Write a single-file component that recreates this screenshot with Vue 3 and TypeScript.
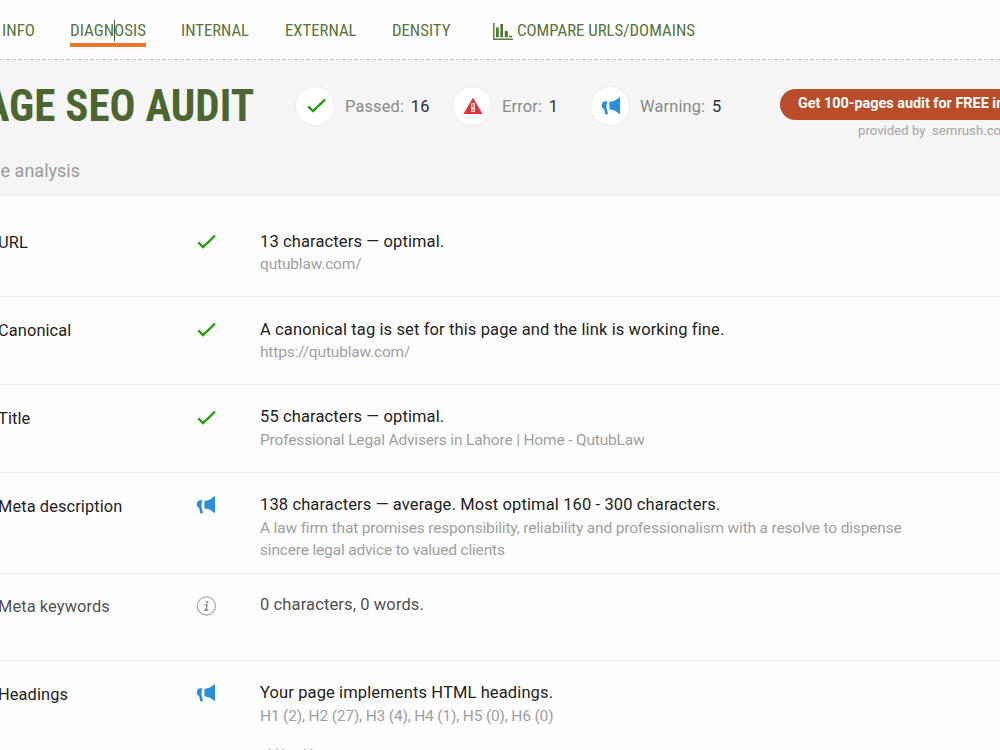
<script setup lang="ts">
import { computed, defineComponent, h } from 'vue'

type Status = 'pass' | 'error' | 'warn' | 'info'

interface AuditRow {
  label: string
  status: Status
  text: string
  details: string[]
  height: number
  muted?: boolean
}

const nav = [
  { label: 'INFO', x: 2, width: 33 },
  { label: 'DIAGNOSIS', x: 70.4, width: 76, active: true },
  { label: 'INTERNAL', x: 181.4, width: 68 },
  { label: 'EXTERNAL', x: 285, width: 71.5 },
  { label: 'DENSITY', x: 392.4, width: 58.5 },
]
const navItems = computed(() =>
  nav.map((n, i) => ({
    ...n,
    gap: i === 0 ? n.x : n.x - nav[i - 1].x - nav[i - 1].width,
  })),
)

const stats: { status: Status; label: string; count: number; cls: string }[] = [
  { status: 'pass', label: 'Passed:', count: 16, cls: 'passed' },
  { status: 'error', label: 'Error:', count: 1, cls: 'errors' },
  { status: 'warn', label: 'Warning:', count: 5, cls: 'warnings' },
]

const rows: AuditRow[] = [
  { label: 'URL', status: 'pass', text: '13 characters — optimal.', details: ['qutublaw.com/'], height: 88 },
  { label: 'Canonical', status: 'pass', text: 'A canonical tag is set for this page and the link is working fine.', details: ['https://qutublaw.com/'], height: 88 },
  { label: 'Title', status: 'pass', text: '55 characters — optimal.', details: ['Professional Legal Advisers in Lahore | Home - QutubLaw'], height: 88 },
  {
    label: 'Meta description',
    status: 'warn',
    text: '138 characters — average. Most optimal 160 - 300 characters.',
    details: [
      'A law firm that promises responsibility, reliability and professionalism with a resolve to dispense',
      'sincere legal advice to valued clients',
    ],
    height: 100.5,
  },
  { label: 'Meta keywords', status: 'info', text: '0 characters, 0 words.', details: [], height: 87.5, muted: true },
  { label: 'Headings', status: 'warn', text: 'Your page implements HTML headings.', details: ['H1 (2), H2 (27), H3 (4), H4 (1), H5 (0), H6 (0)'], height: 120 },
]

const StatusIcon = defineComponent({
  props: { status: { type: String, required: true } },
  setup(props) {
    return () => {
      const shapes = {
        pass: [h('path', { d: 'M2.2 9.4L7 14L19 2.6', fill: 'none', stroke: '#25a10f', 'stroke-width': 2.4 })],
        error: [
          h('path', { d: 'M10 .7L19.6 17H.4Z', fill: '#e8302f' }),
          h('path', { d: 'M8.2 6.2H11.8V15H8.2Z', fill: '#fff' }),
          h('path', { d: 'M10 7V10.8M10 12.3V14.2', stroke: '#e8302f', 'stroke-width': 1.2 }),
        ],
        warn: [
          h('path', { d: 'M19 0V17.3L13.6 13.5L8.4 12.3V5L13.5 3.8Z', fill: '#2b8ddd' }),
          h('path', { d: 'M6.6 4.3H3.7C2 4.8 .7 6.4 .8 8.5C.9 10.3 1.9 11.3 3.1 12L4.4 17.6L7 17L5.8 12.1C5.2 9.7 5.4 6.8 6.6 4.3Z', fill: '#2b8ddd' }),
        ],
        info: [
          h('circle', { cx: 10.4, cy: 9, r: 9.1, fill: 'none', stroke: '#aaa', 'stroke-width': 1.2 }),
          h('circle', { cx: 11.3, cy: 5.1, r: 1.2, fill: '#888' }),
          h('path', { d: 'M8.4 7.9H11.1L10 13H12.3M8.2 13H10', fill: 'none', stroke: '#888', 'stroke-width': 1.3 }),
        ],
      }
      return h('svg', { width: 20, height: 18, viewBox: '0 0 20 18', overflow: 'visible' }, shapes[props.status as Status])
    }
  },
})
</script>

<template>
  <div class="page">
    <nav class="nav">
      <a v-for="n in navItems" :key="n.label" class="nav-item" :class="{ active: n.active }" :style="{ marginLeft: n.gap + 'px', width: n.width + 'px' }">
        <svg height="24" :width="n.width" overflow="visible">
          <text x="0" y="19" :textLength="n.width" lengthAdjust="spacingAndGlyphs">{{ n.label }}</text>
        </svg>
        <span v-if="n.active" class="caret"></span>
      </a>
      <a class="nav-item compare">
        <svg class="bars" width="20" height="18" viewBox="0 0 20 18">
          <path d="M.8 0V16.2H19.8" fill="none" stroke="#56803c" stroke-width="1.5" />
          <path d="M3 4.5H5.7V14.2H3ZM7.4 1H10V14.2H7.4ZM11.8 8H14.8V14.2H11.8ZM16 12.8H19V14.2H16Z" fill="#477829" />
        </svg>
        <svg height="24" width="178" overflow="visible">
          <text x="0" y="19" textLength="178" lengthAdjust="spacingAndGlyphs">COMPARE URLS/DOMAINS</text>
        </svg>
      </a>
    </nav>

    <header class="hero">
      <div class="hero-top">
        <h1>
          <svg width="256" height="50">
            <text x="254" y="46" text-anchor="end" textLength="291" lengthAdjust="spacingAndGlyphs">PAGE SEO AUDIT</text>
          </svg>
        </h1>
        <div v-for="s in stats" :key="s.label" class="stat" :class="s.cls">
          <span class="disc"><StatusIcon :status="s.status" /></span>
          <span class="stat-label">{{ s.label }}</span>
          <span class="stat-count">{{ s.count }}</span>
        </div>
        <div class="promo">
          <a class="cta">Get 100-pages audit for FREE in 2 minutes</a>
          <span class="provider">provided by&nbsp; semrush.com</span>
        </div>
      </div>
      <div class="subtitle"><span>Page analysis</span></div>
    </header>

    <main>
      <section v-for="r in rows" :key="r.label" class="row" :class="{ muted: r.muted }" :style="{ height: r.height + 'px' }">
        <div class="label">{{ r.label }}</div>
        <div class="status" :class="r.status"><StatusIcon :status="r.status" /></div>
        <div class="body">
          <p class="text">{{ r.text }}</p>
          <p v-for="d in r.details" :key="d" class="detail">{{ d }}</p>
          <p v-if="r.label === 'Headings'" class="detail tree">&lt;H1&gt;&nbsp; H</p>
        </div>
      </section>
    </main>
  </div>
</template>

<style>
body { margin: 0; overflow: hidden; }
</style>

<style scoped>
.page { width: 1000px; height: 750px; overflow: hidden; background: #fefefe; font-family: Roboto, "Liberation Sans", sans-serif; color: #222; }
.nav { display: flex; align-items: flex-start; height: 59px; box-sizing: border-box; padding-top: 17px; }
.nav-item { position: relative; flex: none; height: 26px; }
.nav-item svg { display: block; flex: none; }
.nav text, h1 text { font-family: "Roboto Condensed", Roboto, sans-serif; font-stretch: 75%; fill: #56753c; }
.nav text { font-size: 17px; }
.active { border-bottom: 4px solid #ec762c; }
.caret { position: absolute; left: 44px; top: 3px; width: 1px; height: 21px; background: #456030; }
.compare { display: flex; margin-left: 42px; gap: 4px; }
.compare .bars { margin-top: 6px; }
.hero { height: 137px; background: #f4f5f4; border-bottom: 1px solid #f0f0f0; box-sizing: border-box; overflow: hidden; }
.hero::before { content: ""; display: block; height: 1px; background: repeating-linear-gradient(90deg, #c6c6c6 0 4px, #f6f6f6 4px 6px); }
.hero-top { display: flex; height: 93px; align-items: flex-start; }
h1 { margin: 15px 0 0; width: 254px; height: 50px; flex: none; }
h1 svg { display: block; }
h1 text { fill: #4b662f; font-size: 44px; font-weight: 700; }
.stat { display: flex; align-items: center; height: 42px; margin-top: 25px; flex: none; font-size: 16.4px; letter-spacing: .15px; }
.passed { width: 157px; margin-left: 41px; }
.errors { width: 138px; }
.warnings { width: 190px; }
.disc { width: 40px; height: 40px; box-sizing: border-box; border: 1px solid #ececec; border-radius: 50%; background: #fff; display: flex; align-items: center; justify-content: center; margin-right: 10px; }
.disc svg { margin-left: 2px; }
.stat-label { color: #8a8a8a; margin-right: 6.8px; }
.stat-count { color: #2c2c38; }
.promo { display: flex; flex-direction: column; width: 300px; flex: none; margin-top: 29px; }
.cta { height: 31px; line-height: 29px; border-radius: 16px; background: #b94d2a; color: #fff; font-size: 14.4px; font-weight: 700; padding-left: 18px; white-space: nowrap; }
.provider { margin: 2px 0 0 78px; font-size: 13.2px; line-height: 17px; color: #a6a6a6; }
.subtitle { width: 80px; height: 30px; display: flex; justify-content: flex-end; white-space: nowrap; font-size: 18px; line-height: 36px; color: #9b9b9b; }
main { padding-top: 13px; }
.row { display: grid; grid-template-columns: 196px 64px 1fr; box-sizing: border-box; border-bottom: 1px solid #efefef; padding-top: 20px; }
.label { margin-left: -2px; font-size: 16.4px; line-height: 28px; letter-spacing: .1px; }
.status { padding-top: 4px; line-height: 0; }
.status.warn { padding-top: 3px; }
.text, .detail { margin: 0; white-space: nowrap; }
.text { font-size: 16.5px; line-height: 25px; letter-spacing: .12px; }
.row:nth-child(n+3) .text { margin-top: -1px; margin-bottom: 1px; }
.detail { font-size: 15.5px; line-height: 22px; letter-spacing: -.17px; color: #9e9e9e; position: relative; top: -1.3px; }
.tree { margin: 17px 0 0; }
.row.muted { color: #505050; padding-top: 19px; }
</style>
